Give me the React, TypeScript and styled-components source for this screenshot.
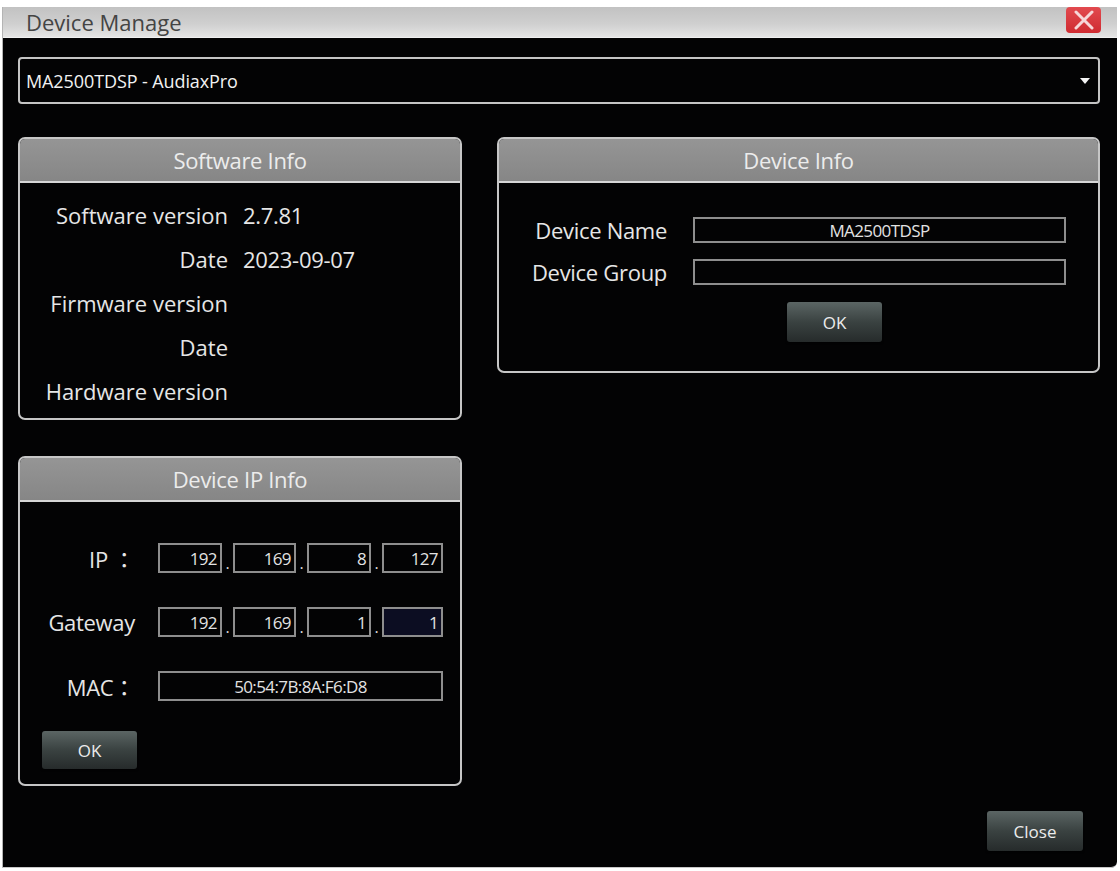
import React from 'react';
import styled, { createGlobalStyle } from 'styled-components';

const GlobalStyle = createGlobalStyle`
  html, body {
    margin: 0;
    padding: 0;
    background: #ffffff;
  }
  body {
    font-family: 'Open Sans', 'Noto Sans', 'Noto Sans CJK JP', sans-serif;
  }
`;

const softwareRows = [
  { label: 'Software version', value: '2.7.81' },
  { label: 'Date', value: '2023-09-07' },
  { label: 'Firmware version', value: '' },
  { label: 'Date', value: '' },
  { label: 'Hardware version', value: '' },
];

const ipRows = [
  { label: 'IP ：', parts: ['192', '169', '8', '127'] },
  { label: 'Gateway', parts: ['192', '169', '1', '1'], focused: 3 },
];

export default function App() {
  return (
    <>
      <GlobalStyle />
      <Window>
        <TitleBar>
          <Title>Device Manage</Title>
          <CloseX aria-label="close">
            <svg width="22" height="20" viewBox="0 0 22 20">
              <path
                d="M3 2 L19 18 M19 2 L3 18"
                stroke="#f6d6d8"
                strokeWidth="3"
                strokeLinecap="round"
              />
            </svg>
          </CloseX>
        </TitleBar>
        <Body>
          <Select>
            <span>MA2500TDSP - AudiaxPro</span>
            <Arrow />
          </Select>
          <Columns>
            <Column>
              <Panel $height={283}>
                <PanelHeader>Software Info</PanelHeader>
                <InfoGrid>
                  {softwareRows.map((r, i) => (
                    <React.Fragment key={i}>
                      <InfoLabel>{r.label}</InfoLabel>
                      <InfoValue>{r.value}</InfoValue>
                    </React.Fragment>
                  ))}
                </InfoGrid>
              </Panel>
              <Panel $height={330}>
                <PanelHeader>Device IP Info</PanelHeader>
                <IpBody>
                  <IpGrid>
                    {ipRows.map((r) => (
                      <React.Fragment key={r.label}>
                        <IpLabel>{r.label}</IpLabel>
                        <IpFields>
                          {r.parts.map((p, i) => (
                            <React.Fragment key={i}>
                              {i > 0 && <Dot>.</Dot>}
                              <IpBox $focused={r.focused === i}>{p}</IpBox>
                            </React.Fragment>
                          ))}
                        </IpFields>
                      </React.Fragment>
                    ))}
                    <IpLabel>MAC：</IpLabel>
                    <MacBox>50:54:7B:8A:F6:D8</MacBox>
                  </IpGrid>
                  <IpOk>OK</IpOk>
                </IpBody>
              </Panel>
            </Column>
            <RightColumn>
              <Panel $height={236}>
                <PanelHeader>Device Info</PanelHeader>
                <DeviceBody>
                  <DeviceGrid>
                    <DeviceLabel>Device Name</DeviceLabel>
                    <TextBox>MA2500TDSP</TextBox>
                    <DeviceLabel>Device Group</DeviceLabel>
                    <TextBox />
                  </DeviceGrid>
                  <DeviceOk>OK</DeviceOk>
                </DeviceBody>
              </Panel>
              <CloseButton>Close</CloseButton>
            </RightColumn>
          </Columns>
        </Body>
      </Window>
    </>
  );
}

const Window = styled.div`
  margin: 7px 0 0 2px;
  width: 1115px;
  height: 861px;
  display: flex;
  flex-direction: column;
  background: #030304;
  border-left: 1px solid #b4b4b4;
  border-bottom: 1px solid #c8c8c8;
  border-bottom-right-radius: 6px;
  box-sizing: border-box;
  overflow: hidden;
`;

const TitleBar = styled.div`
  height: 31px;
  flex: none;
  display: flex;
  align-items: flex-start;
  justify-content: space-between;
  padding: 0 16px 0 23px;
  background: linear-gradient(#c2c2c2, #cfcfcf 55%, #e4e4e4);
  border-bottom: 1px solid #f0f0f0;
  box-sizing: border-box;
`;

const Title = styled.div`
  font-size: 22px;
  color: #444444;
  line-height: 30px;
`;

const CloseX = styled.div`
  width: 35px;
  height: 26px;
  border-radius: 4px;
  background: linear-gradient(#e24a4f, #cf2b31);
  display: flex;
  align-items: center;
  justify-content: center;
`;

const Body = styled.div`
  flex: 1;
  display: flex;
  flex-direction: column;
  padding: 19px 17px 16px 15px;
  min-height: 0;
`;

const Select = styled.div`
  height: 47px;
  flex: none;
  box-sizing: border-box;
  border: 2px solid #c4c4c4;
  border-radius: 4px;
  display: flex;
  align-items: center;
  justify-content: space-between;
  padding: 0 8px 0 6px;
  color: #f2f2f2;
  font-size: 18px;
  letter-spacing: -0.1px;
  margin-bottom: 33px;
`;

const Arrow = styled.span`
  width: 0;
  height: 0;
  border-left: 5px solid transparent;
  border-right: 5px solid transparent;
  border-top: 6px solid #f4f4f4;
`;

const Columns = styled.div`
  flex: 1;
  display: grid;
  grid-template-columns: 444px 1fr;
  column-gap: 35px;
  min-height: 0;
`;

const Column = styled.div`
  display: flex;
  flex-direction: column;
  gap: 36px;
`;

const RightColumn = styled(Column)`
  gap: 0;
`;

const Panel = styled.section<{ $height: number }>`
  height: ${(p) => p.$height}px;
  box-sizing: border-box;
  border: 2px solid #c6c6c6;
  border-radius: 7px;
  overflow: hidden;
  display: flex;
  flex-direction: column;
`;

const PanelHeader = styled.div`
  height: 44px;
  flex: none;
  box-sizing: border-box;
  background: linear-gradient(#959595, #868686);
  border-bottom: 2px solid #d6d6d6;
  color: #ececec;
  font-size: 22px;
  display: flex;
  align-items: center;
  justify-content: center;
  letter-spacing: -0.3px;
`;

const InfoGrid = styled.div`
  display: grid;
  grid-template-columns: 208px 1fr;
  grid-auto-rows: 44px;
  column-gap: 15px;
  padding-top: 10px;
  align-items: center;
  font-size: 22px;
  color: #e6e6e6;
`;

const InfoLabel = styled.div`
  text-align: right;
  white-space: nowrap;
`;

const InfoValue = styled.div`
  letter-spacing: -0.3px;
`;

const Button = styled.button`
  font-family: inherit;
  font-size: 17px;
  color: #ececec;
  border: none;
  border-radius: 3px;
  background: linear-gradient(#5b6564, #3a4241 50%, #262b2b);
  box-shadow: 0 1px 2px rgba(0, 0, 0, 0.6);
  padding: 0;
  cursor: pointer;
`;

const IpBody = styled.div`
  padding: 41px 17px 0 24px;
  display: flex;
  flex-direction: column;
`;

const IpGrid = styled.div`
  display: grid;
  grid-template-columns: 91px 1fr;
  grid-auto-rows: 30px;
  column-gap: 23px;
  row-gap: 34px;
  align-items: center;
`;

const IpLabel = styled.div`
  text-align: right;
  font-size: 22px;
  color: #e6e6e6;
  white-space: nowrap;
  letter-spacing: -0.3px;
`;

const IpFields = styled.div`
  display: grid;
  grid-template-columns: 64px 11px 63px 11px 64px 11px 1fr;
  height: 30px;
`;

const Dot = styled.span`
  color: #dcdcdc;
  font-size: 16px;
  line-height: 1;
  display: flex;
  align-items: flex-end;
  justify-content: center;
  padding-bottom: 2px;
`;

const FieldBox = styled.div`
  box-sizing: border-box;
  height: 30px;
  border: 2px solid #8e8e8e;
  color: #e2e2e2;
  font-size: 17px;
  letter-spacing: -0.6px;
  display: flex;
  align-items: center;
`;

const IpBox = styled(FieldBox)<{ $focused?: boolean }>`
  justify-content: flex-end;
  padding-right: 3px;
  background: ${(p) => (p.$focused ? '#0c0d22' : 'transparent')};
`;

const MacBox = styled(FieldBox)`
  justify-content: center;
`;

const IpOk = styled(Button)`
  width: 95px;
  height: 38px;
  margin: 30px 0 0 -2px;
`;

const DeviceBody = styled.div`
  padding: 34px 0 0 27px;
  display: flex;
  flex-direction: column;
  align-items: flex-start;
`;

const DeviceGrid = styled.div`
  display: grid;
  grid-template-columns: 141px 373px;
  grid-auto-rows: 26px;
  column-gap: 26px;
  row-gap: 16px;
  align-items: center;
`;

const DeviceLabel = styled.div`
  text-align: right;
  font-size: 22px;
  color: #e6e6e6;
  white-space: nowrap;
  letter-spacing: -0.3px;
`;

const TextBox = styled(FieldBox)`
  height: 26px;
  justify-content: center;
`;

const DeviceOk = styled(Button)`
  width: 95px;
  height: 40px;
  margin: 17px 0 0 261px;
`;

const CloseButton = styled(Button)`
  margin-top: auto;
  align-self: flex-end;
  margin-right: 17px;
  width: 96px;
  height: 40px;
`;
